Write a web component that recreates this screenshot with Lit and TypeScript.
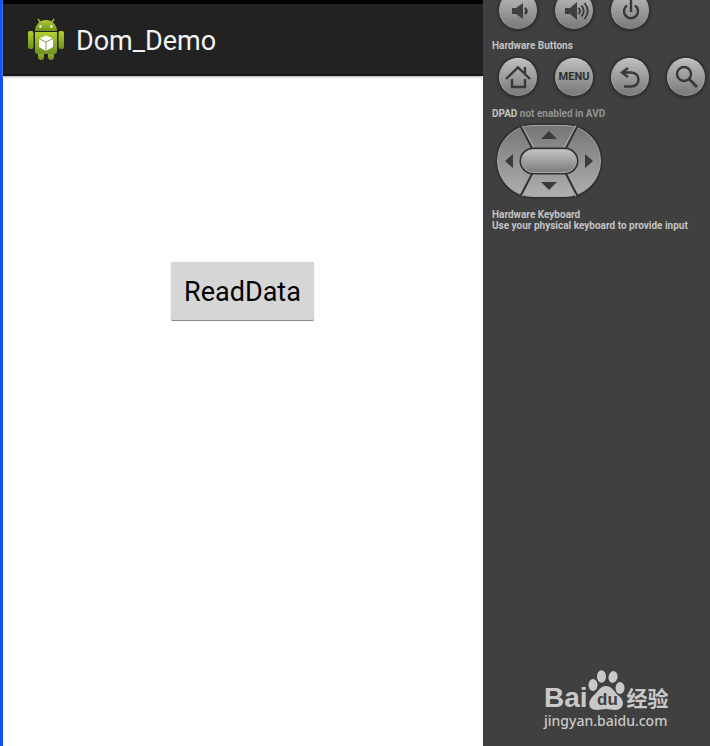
import { LitElement, html, css, svg } from "lit";
import { customElement, property } from "lit/decorators.js";

const ICONS: Record<string, unknown> = {
  "volume-down": svg`<path class="fill" d="M12 16h4l7-5v16l-7-5h-4z"/><path class="line" d="M25 16q3 3 0 6"/>`,
  "volume-up": svg`<path class="fill" d="M9 16h5l7-6v18l-7-6H9z"/><path class="line thin" d="M22.500 16q3 3 0 6M25.500 13.500q4.500 5.500 0 11M28.500 11q6.500 8 0 16"/>`,
  power: svg`<path class="line" d="M19 8v12M15 13.500a7 7 0 1 0 8 0"/>`,
  home: svg`<path class="line" d="M6 20L18 8.500l12 11.500M25 14V8M12 20v8h13v-8"/>`,
  back: svg`<path class="line" d="M16 9l-6 4.500 6 4.500M10 13.500h9c10 0 10 14 0 14h-7"/>`,
  search: svg`<circle class="line" cx="16" cy="15" r="7"/><path class="line thick" d="M21 20l8 8"/>`,
};

@customElement("hardware-key")
class HardwareKey extends LitElement {
  @property() icon = "";
  @property() label = "";

  static styles = css`
    :host {
      display: block;
    }
    .key {
      display: grid;
      place-items: center;
      box-sizing: border-box;
      width: 38px;
      height: 38px;
      padding: 0;
      border: 1px solid #b4b4b4;
      border-color: #d2d2d2 #a4a4a4 #8c8c8c;
      border-radius: 50%;
      background: linear-gradient(#bebebe, #808080 90%);
      box-shadow: 0 0 0 2px #333, 0 1px 3px 1px #2a2a2a;
      color: #2e2e2e;
      font: bold 11px/12px Roboto, sans-serif;
    }
    svg {
      width: 38px;
      height: 38px;
    }
    .fill {
      fill: #404040;
    }
    .line {
      fill: none;
      stroke: #383838;
      stroke-width: 2.4;
    }
    .thin {
      stroke-width: 1.8;
    }
    .thick {
      stroke-width: 3;
    }
  `;

  render() {
    return html`<button class="key" aria-label=${this.label}>
      ${this.icon ? html`<svg viewBox="0 0 38 38" aria-hidden="true">${ICONS[this.icon]}</svg>` : this.label}
    </button>`;
  }
}

@customElement("direction-pad")
class DirectionPad extends LitElement {
  static styles = css`
    :host {
      display: block;
      position: relative;
      width: 108px;
      height: 76px;
    }
    .shape {
      display: block;
      width: 108px;
      height: 76px;
    }
    .keys {
      position: absolute;
      inset: 0;
      display: grid;
      grid-template: 26px 24px 26px / 24px 60px 24px;
    }
    .zone {
      padding: 0;
      border: 0;
      background: none;
    }
    .up {
      grid-area: 1 / 2;
    }
    .left {
      grid-area: 2 / 1;
    }
    .center {
      grid-area: 2 / 2;
    }
    .right {
      grid-area: 2 / 3;
    }
    .down {
      grid-area: 3 / 2;
    }
  `;

  render() {
    return html`
      <svg class="shape" viewBox="0 0 108 76" aria-hidden="true">
        <defs>
          <linearGradient id="side" x2="0" y2="1"><stop stop-color="#767676" /><stop offset="1" stop-color="#aeb0b0" /></linearGradient>
          <linearGradient id="mid" x2="0" y2="1"><stop stop-color="#c4c4c4" /><stop offset="1" stop-color="#7c7c7c" /></linearGradient>
        </defs>
        <rect x="0.500" y="0.500" width="107" height="75" rx="37" fill="#303030" />
        <rect x="2.500" y="2.500" width="103" height="71" rx="35.500" fill="url(#side)" stroke="#a6a6a6" />
        <path d="M26 3L39 27M82 3L69 27M26 73L39 49M82 73L69 49" stroke="#a6a6a6" stroke-width="3.500" />
        <path d="M25 2L38 27M83 2L70 27M25 74L38 49M83 74L70 49" stroke="#303030" stroke-width="2" />
        <rect x="24.500" y="24.500" width="59" height="27" rx="13.500" fill="#303030" />
        <rect x="26.500" y="26.500" width="55" height="23" rx="11.500" fill="url(#mid)" stroke="#a8a8a8" />
        <path d="M46 16l8-8 8 8zM46 59h16l-8 8zM18 31v14l-8-7zM90 31v14l8-7z" fill="#3a3a3a" />
      </svg>
      <div class="keys">
        ${["up", "left", "center", "right", "down"].map(
          (d) => html`<button class="zone ${d}" aria-label=${d} disabled></button>`,
        )}
      </div>
    `;
  }
}

@customElement("app-root")
class AppRoot extends LitElement {
  static styles = css`
    :host {
      display: grid;
      grid-template-columns: minmax(0, 1fr) 227px;
      min-height: 100vh;
      overflow: hidden;
      background: #fff;
      font-family: Roboto, sans-serif;
    }
    .screen {
      border-left: 3px solid #1450f5;
    }
    .bar {
      display: flex;
      align-items: center;
      gap: 11px;
      box-sizing: border-box;
      height: 76px;
      padding-left: 24px;
      border-top: 4px solid #000;
      border-bottom: 2px solid #141414;
      background: #222;
      box-shadow: 0 1px 2px #a8a8a8;
    }
    .robot {
      width: 38px;
      height: 44px;
    }
    .title {
      margin: 0;
      padding-top: 4px;
      color: #f3f3f3;
      font-size: 27px;
      font-weight: 400;
      line-height: 36px;
    }
    .content {
      padding: 186px 168px;
    }
    .read {
      width: 143px;
      height: 59px;
      padding: 2px 0 0;
      border: 0;
      border-bottom: 1px solid #8c8c8c;
      border-radius: 2px;
      background: #d6d6d6;
      box-shadow: 0 0 1px #aaa;
      color: #000;
      font: 27px/36px Roboto, sans-serif;
    }
    .panel {
      display: flex;
      flex-direction: column;
      padding: 0 0 16px 9px;
      background: #404040;
      color: #c4c4c4;
    }
    .keys {
      display: flex;
      gap: 18px;
      padding-left: 7px;
    }
    .top {
      margin-top: -9px;
    }
    .label {
      margin: 11px 0 7px;
      font-size: 10px;
      font-weight: 700;
      line-height: 11px;
    }
    .note {
      margin: 12px 0 4px;
    }
    .keyboard {
      margin-top: 10px;
    }
    .muted {
      color: #939393;
    }
    .pad {
      margin-left: 3px;
    }
    .brand {
      margin: auto 0 0 52px;
      color: #c9c9c9;
      text-decoration: none;
    }
    .logo {
      display: flex;
      align-items: flex-end;
      height: 42px;
    }
    .bai {
      font: bold 28px/28px "Liberation Sans", sans-serif;
    }
    .paw {
      width: 38px;
      height: 42px;
    }
    .du {
      font: bold 17px "Liberation Sans", sans-serif;
      fill: #404040;
    }
    .cn {
      margin-left: 1px;
      font: bold 21px/30px "Noto Sans CJK SC", sans-serif;
    }
    .site {
      display: block;
      font: 500 14px/18px "Noto Sans", sans-serif;
    }
  `;

  render() {
    return html`
      <main class="screen">
        <header class="bar">
          <svg class="robot" viewBox="0 0 38 44" aria-hidden="true">
            <defs>
              <linearGradient id="green" x2="0" y2="1"><stop stop-color="#b0cf32" /><stop offset="1" stop-color="#6f9120" /></linearGradient>
            </defs>
            <path d="M13 5l-2-3M25 5l2-3" stroke="#9abb2c" stroke-width="1.500" />
            <path d="M8 14a11 11 0 0 1 22 0z" fill="url(#green)" />
            <g fill="url(#green)">
              <rect x="1" y="14" width="5.500" height="18" rx="2" />
              <rect x="31.500" y="14" width="5.500" height="18" rx="2" />
              <rect x="11" y="30" width="6" height="13" rx="3" />
              <rect x="21" y="30" width="6" height="13" rx="3" />
              <path d="M8 15h22V34q0 3-3 3H11q-3 0-3-3z" />
            </g>
            <circle cx="13.500" cy="9.500" r="1.200" fill="#fff" /><circle cx="24.500" cy="9.500" r="1.200" fill="#fff" />
            <path d="M19 18.500l7 3v8.500l-7 4-7-4v-8.500z" fill="#fff" />
            <path d="M12 21.500l7 3.500 7-3.500M19 25v9" fill="none" stroke="#8b9d5a" />
          </svg>
          <h1 class="title">Dom_Demo</h1>
        </header>
        <div class="content"><button class="read">ReadData</button></div>
      </main>
      <aside class="panel">
        <div class="keys top">
          <hardware-key icon="volume-down" label="Volume down"></hardware-key>
          <hardware-key icon="volume-up" label="Volume up"></hardware-key>
          <hardware-key icon="power" label="Power"></hardware-key>
        </div>
        <p class="label">Hardware Buttons</p>
        <div class="keys">
          <hardware-key icon="home" label="Home"></hardware-key>
          <hardware-key label="MENU"></hardware-key>
          <hardware-key icon="back" label="Back"></hardware-key>
          <hardware-key icon="search" label="Search"></hardware-key>
        </div>
        <p class="label note">DPAD <span class="muted">not enabled in AVD</span></p>
        <direction-pad class="pad"></direction-pad>
        <p class="label keyboard">Hardware Keyboard<br />Use your physical keyboard to provide input</p>
        <a class="brand" href="#">
          <span class="logo">
            <span class="bai">Bai</span>
            <svg class="paw" viewBox="0 0 38 42">
              <g fill="#c9c9c9">
                <ellipse cx="5" cy="15" rx="4.500" ry="6" />
                <ellipse cx="13.500" cy="6.500" rx="4.500" ry="6.200" />
                <ellipse cx="25" cy="7" rx="4.500" ry="6" transform="rotate(12 25 7)" />
                <ellipse cx="32" cy="18" rx="4.500" ry="6" />
                <path d="M18 16c6 0 8 6 13 10 7 6 4 14-4 14-4 0-5-1-9-1s-5 1-9 1C0 40-1 32 5 26c5-4 7-10 13-10z" />
              </g>
              <text class="du" x="9" y="35">du</text>
            </svg>
            <span class="cn">经验</span>
          </span>
          <span class="site">jingyan.baidu.com</span>
        </a>
      </aside>
    `;
  }
}
